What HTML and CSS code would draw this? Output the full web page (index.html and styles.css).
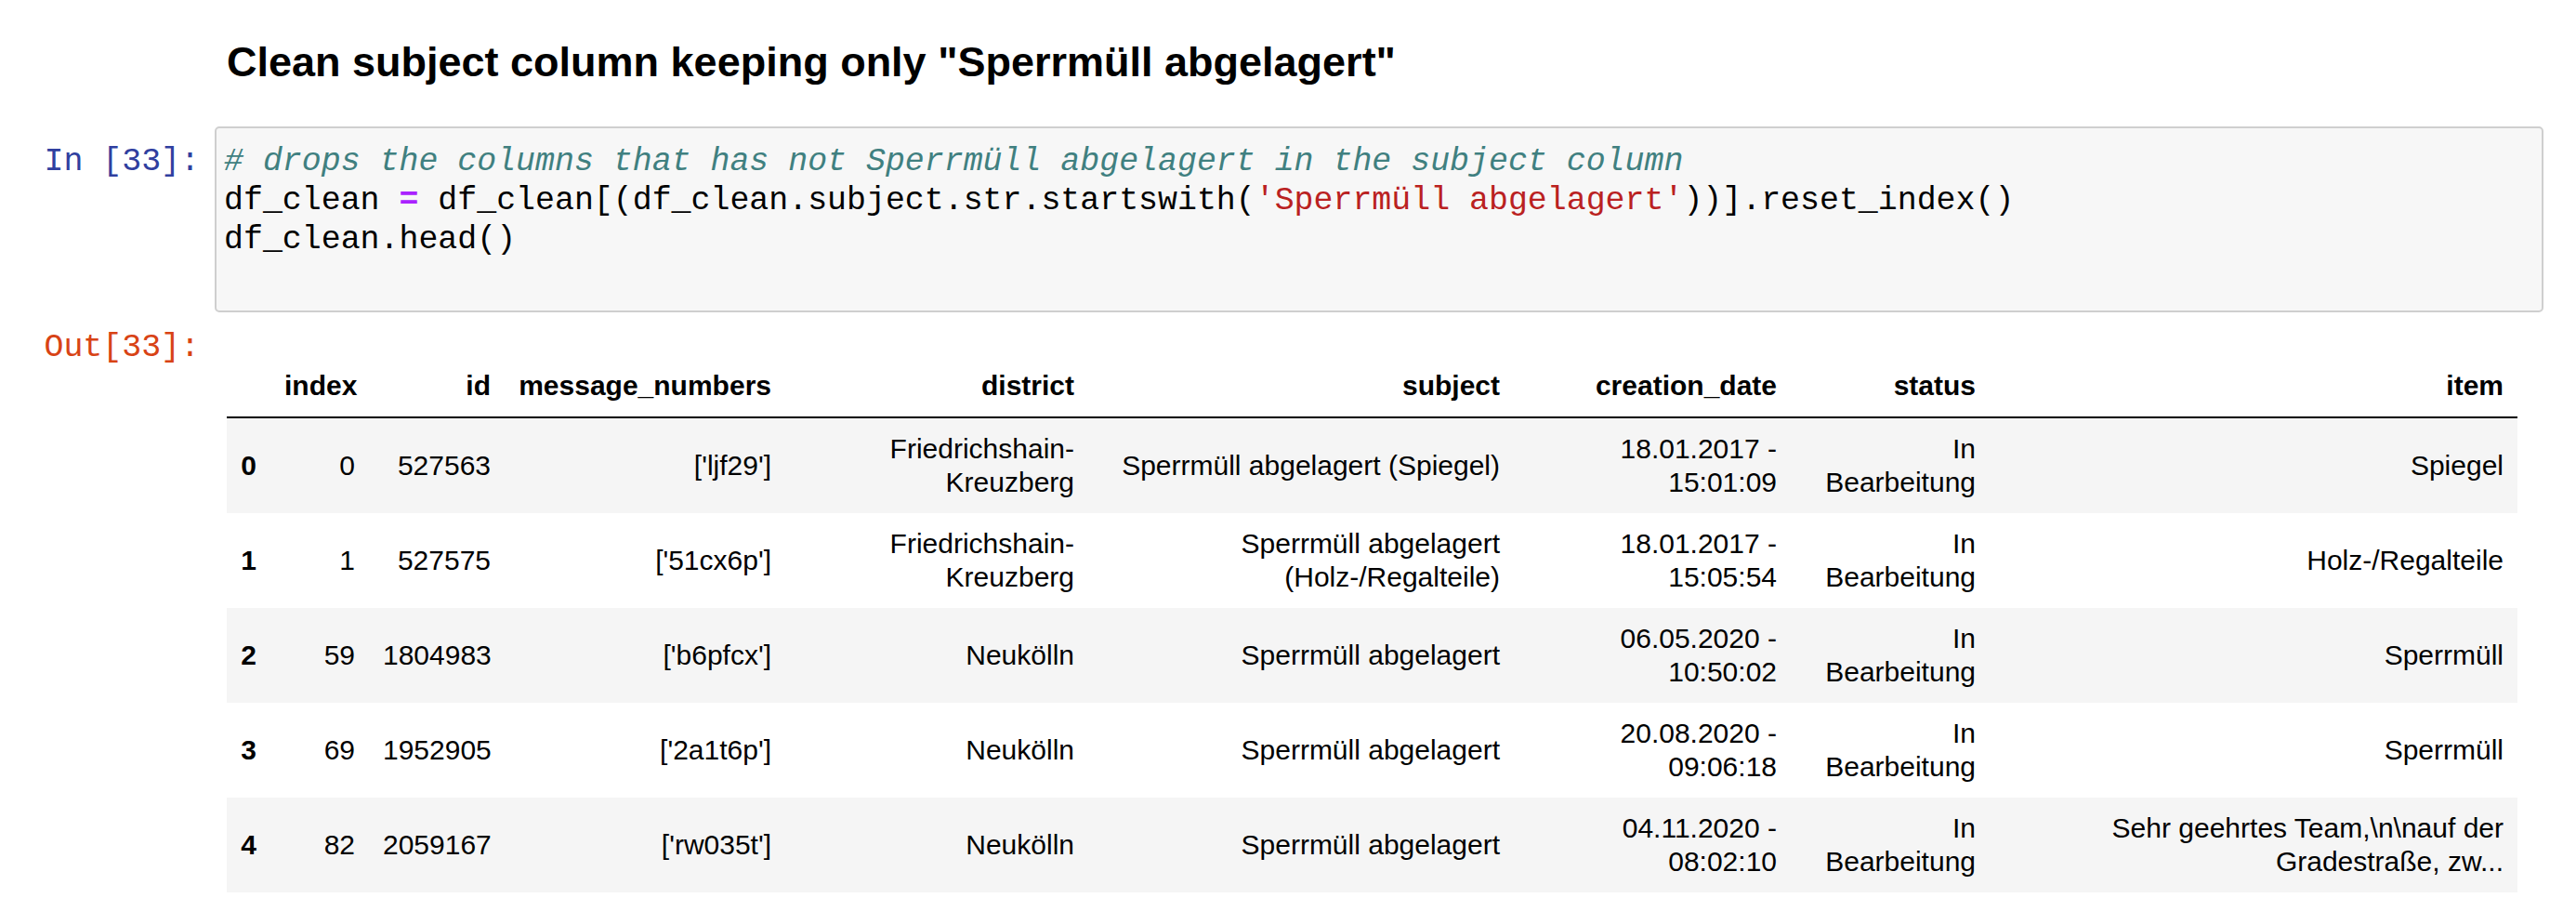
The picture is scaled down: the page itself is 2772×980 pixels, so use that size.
FILE: index.html
```html
<!DOCTYPE html>
<html lang="de">
<head>
<meta charset="utf-8">
<title>Notebook</title>
<link rel="stylesheet" href="styles.css">
</head>
<body>
<div class="nb">
  <div class="cell md-cell">
    <div class="prompt"></div>
    <div class="md-body"><h3>Clean subject column keeping only "Sperrmüll abgelagert"</h3></div>
  </div>

  <div class="cell code-cell">
    <div class="prompt in-prompt">In [33]:</div>
    <div class="input-area">
      <div class="code">
        <div class="line"><span class="cm"># drops the columns that has not Sperrmüll abgelagert in the subject column</span></div>
        <div class="line"><span>df_clean </span><span class="op">=</span><span> df_clean[(df_clean.subject.str.startswith(</span><span class="st">'Sperrmüll abgelagert'</span><span>))].reset_index()</span></div>
        <div class="line"><span>df_clean.head()</span></div>
      </div>
    </div>
  </div>

  <div class="cell out-cell">
    <div class="prompt out-prompt">Out[33]:</div>
    <div class="output">
      <table class="dataframe">
        <colgroup>
          <col class="c0"><col class="c1"><col class="c2"><col class="c3"><col class="c4"><col class="c5"><col class="c6"><col class="c7"><col class="c8">
        </colgroup>
        <thead>
          <tr><th></th><th>index</th><th>id</th><th>message_numbers</th><th>district</th><th>subject</th><th>creation_date</th><th>status</th><th>item</th></tr>
        </thead>
        <tbody>
          <tr><th>0</th><td>0</td><td>527563</td><td>['ljf29']</td><td>Friedrichshain-Kreuzberg</td><td>Sperrmüll abgelagert (Spiegel)</td><td>18.01.2017 - 15:01:09</td><td>In Bearbeitung</td><td>Spiegel</td></tr>
          <tr><th>1</th><td>1</td><td>527575</td><td>['51cx6p']</td><td>Friedrichshain-Kreuzberg</td><td>Sperrmüll abgelagert (Holz-/Regalteile)</td><td>18.01.2017 - 15:05:54</td><td>In Bearbeitung</td><td>Holz-/Regalteile</td></tr>
          <tr><th>2</th><td>59</td><td>1804983</td><td>['b6pfcx']</td><td>Neukölln</td><td>Sperrmüll abgelagert</td><td>06.05.2020 - 10:50:02</td><td>In Bearbeitung</td><td>Sperrmüll</td></tr>
          <tr><th>3</th><td>69</td><td>1952905</td><td>['2a1t6p']</td><td>Neukölln</td><td>Sperrmüll abgelagert</td><td>20.08.2020 - 09:06:18</td><td>In Bearbeitung</td><td>Sperrmüll</td></tr>
          <tr><th>4</th><td>82</td><td>2059167</td><td>['rw035t']</td><td>Neukölln</td><td>Sperrmüll abgelagert</td><td>04.11.2020 - 08:02:10</td><td>In Bearbeitung</td><td>Sehr geehrtes Team,\n\nauf der Gradestraße, zw...</td></tr>
        </tbody>
      </table>
    </div>
  </div>
</div>
</body>
</html>
```
FILE: styles.css
```css
html, body {
  margin: 0;
  padding: 0;
  background: #ffffff;
}
body {
  font-family: "Liberation Sans", Arial, Helvetica, sans-serif;
  color: #000000;
}
.nb {
  width: 2772px;
}
.cell {
  display: flex;
  align-items: flex-start;
}
.prompt {
  flex: 0 0 231px;
  box-sizing: border-box;
  text-align: right;
  padding-right: 16px;
  font-family: "Liberation Mono", "Courier New", monospace;
  font-size: 34.9px;
  line-height: 42px;
  white-space: pre;
}
.md-cell {
  padding-top: 40px;
}
.md-body h3 {
  margin: 0;
  padding-left: 13px;
  font-size: 45px;
  line-height: 54px;
  font-weight: bold;
}
.code-cell {
  margin-top: 42px;
}
.in-prompt {
  color: #303f9f;
  padding-top: 17px;
}
.input-area {
  flex: 1 1 auto;
  margin-right: 35px;
  border: 2px solid #cfcfcf;
  border-radius: 5px;
  background: #f7f7f7;
}
.code {
  padding: 15px 8px 55px 8px;
  font-family: "Liberation Mono", "Courier New", monospace;
  font-size: 34.9px;
  line-height: 42px;
  color: #000000;
}
.line {
  white-space: pre;
  height: 42px;
}
.cm {
  color: #408080;
  font-style: italic;
}
.op {
  color: #aa22ff;
  font-weight: bold;
}
.st {
  color: #ba2121;
}
.out-cell {
  margin-top: 17px;
}
.out-prompt {
  color: #d84315;
}
.output {
  padding-left: 13px;
  padding-top: 29px;
}
.dataframe {
  table-layout: fixed;
  width: 2465px;
  border-collapse: collapse;
  border-spacing: 0;
  font-size: 30px;
  color: #000000;
}
.dataframe th,
.dataframe td {
  text-align: right;
  vertical-align: middle;
  padding: 15px;
  line-height: 36px;
  white-space: normal;
  border: none;
}
.dataframe th {
  font-weight: bold;
}
.dataframe thead {
  border-bottom: 2px solid #000000;
}
.dataframe tbody tr:nth-child(odd) {
  background: #f5f5f5;
}
.c0 { width: 47px; }
.c1 { width: 106px; }
.c2 { width: 146px; }
.c3 { width: 302px; }
.c4 { width: 326px; }
.c5 { width: 458px; }
.c6 { width: 298px; }
.c7 { width: 214px; }
.c8 { width: 568px; }
```
